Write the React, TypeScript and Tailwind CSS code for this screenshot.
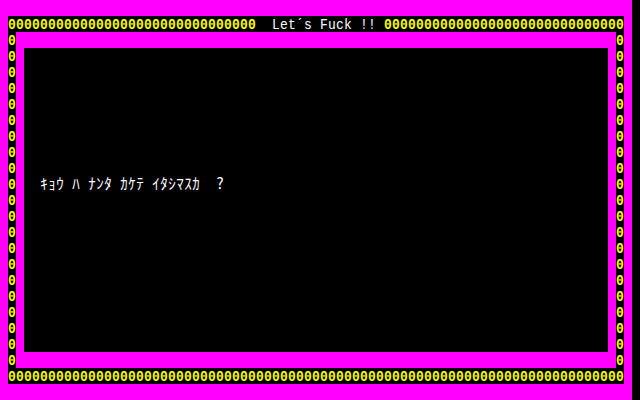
import React from 'react';

const MONO = "font-['Liberation_Mono',monospace]";

const Cells = ({ text, tone }: { text: string; tone: string }) => (
  <>
    {Array.from(text).map((ch, i) => (
      <span
        key={i}
        className={`flex h-[16px] w-[8px] shrink-0 items-center justify-center whitespace-pre ${tone}`}
      >
        <span className="inline-block scale-y-[1.17] text-[13px] leading-[13px]">{ch}</span>
      </span>
    ))}
  </>
);

const Chain = ({ count, vertical = false }: { count: number; vertical?: boolean }) => (
  <div className={`flex bg-black ${MONO} ${vertical ? 'w-[8px] flex-col' : 'h-[16px] flex-row'}`}>
    <Cells text={'0'.repeat(count)} tone="font-bold text-[#ffff00]" />
  </div>
);

const Kana = ({ text }: { text: string }) => (
  <div className="flex">
    {Array.from(text).map((ch, i) => (
      <span
        key={i}
        className="flex h-[16px] w-[8px] shrink-0 items-center justify-center whitespace-pre font-['Noto_Sans_CJK_JP',sans-serif] text-[15px] leading-none text-white"
      >
        {ch}
      </span>
    ))}
  </div>
);

const App = () => {
  return (
    <div className="flex h-[400px] w-[640px] overflow-hidden bg-black">
      <div className="h-[400px] w-[632px] bg-[#ff00ff] px-[8px] pt-[16px]">
        <div className="flex w-[616px] flex-col">
          {/* title bar */}
          <div className={`flex h-[16px] bg-black ${MONO}`}>
            <Cells text={'0'.repeat(31)} tone="font-bold text-[#ffff00]" />
            <Cells text={'  Let´s Fuck !! '} tone="text-white" />
            <Cells text={'0'.repeat(30)} tone="font-bold text-[#ffff00]" />
          </div>

          <div className="flex h-[336px]">
            <Chain count={21} vertical />
            <div className="flex-1 px-[8px] py-[16px]">
              <div className="h-[304px] w-[584px] bg-black pl-[16px] pt-[126px]">
                <Kana text="ｷｮｳ ﾊ ﾅﾝﾀ ｶｹﾃ ｲﾀｼﾏｽｶ  ?" />
              </div>
            </div>
            <Chain count={21} vertical />
          </div>

          <Chain count={77} />
        </div>
      </div>
      <div className="w-[8px] bg-black" />
    </div>
  );
};

export default App;
